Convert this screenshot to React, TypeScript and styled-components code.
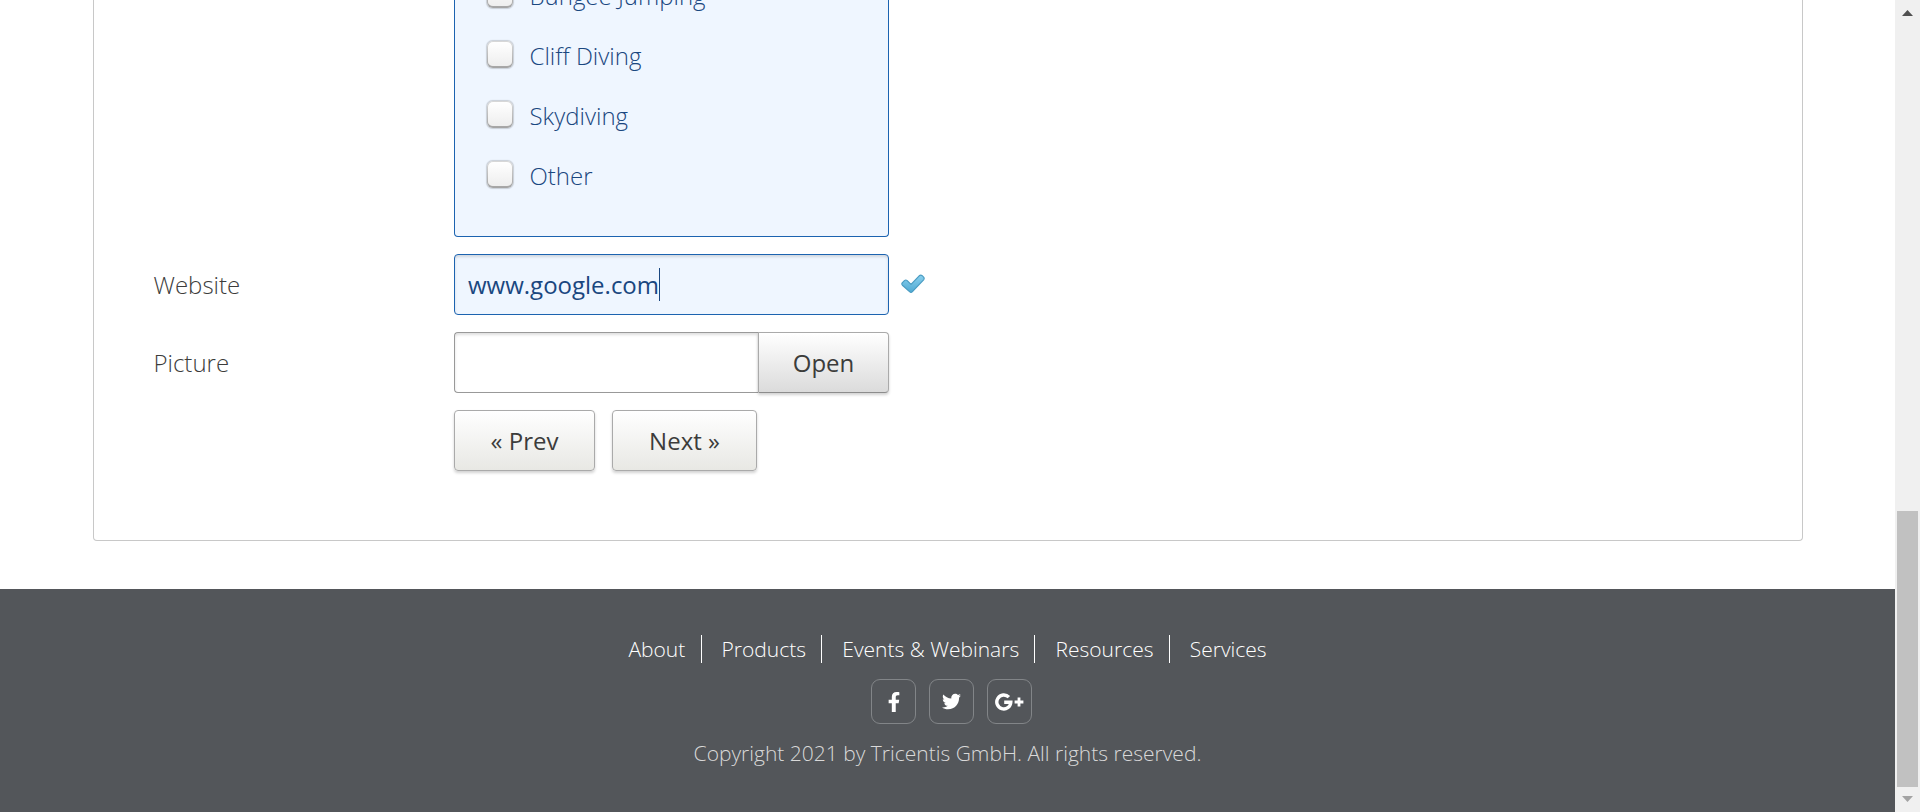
import React from "react";
import styled, { createGlobalStyle } from "styled-components";
import { FaFacebookF, FaTwitter } from "react-icons/fa";

const GlobalStyle = createGlobalStyle`
  *, *::before, *::after { box-sizing: border-box; }
  body {
    margin: 0;
    overflow: hidden;
    background: #fff;
    font-family: "Open Sans", "Liberation Sans", sans-serif;
    font-size: 24px;
    font-weight: 300;
    color: #3c3c3b;
  }
`;

const Window = styled.div`
  display: grid;
  grid-template-columns: 1fr 25px;
  height: 812px;
  overflow: hidden;
`;

const Page = styled.div`
  display: flex;
  flex-direction: column;
  height: 812px;
  overflow: hidden;
`;

const Main = styled.main`
  display: flex;
  height: 589px;
  padding: 0 92px 48px 93px;
`;

const Panel = styled.section`
  display: flex;
  flex-direction: column;
  gap: 17px;
  width: 100%;
  height: 541px;
  padding-left: 59.5px;
  border: 1px solid #c8c8c8;
  border-top: 0;
  border-radius: 0 0 4px 4px;
`;

const Row = styled.div`
  display: grid;
  grid-template-columns: 300.5px 435px auto;
  align-items: center;
`;

const Label = styled.label`
  line-height: 32px;
`;

const Hobbies = styled.div`
  grid-column: 2;
  display: flex;
  flex-direction: column;
  justify-content: flex-end;
  height: 237px;
  padding: 0 32px 30px;
  overflow: hidden;
  border: 1px solid #1c63b0;
  border-top: 0;
  border-radius: 0 0 4px 4px;
  background: #eff6ff;
  color: #1a4780;
`;

const Option = styled.label`
  display: flex;
  flex: none;
  align-items: center;
  gap: 16.5px;
  height: 60px;
  line-height: 32px;
`;

const Box = styled.span`
  width: 26px;
  height: 27px;
  margin-top: -3px;
  border: 1px solid transparent;
  border-bottom-width: 2px;
  border-radius: 6px;
  background:
    linear-gradient(#fff, #eee) padding-box,
    linear-gradient(#d8d8d8, #a4a4a4) border-box;
  box-shadow: 0 0 1px 0.5px rgba(0, 0, 0, 0.16);
`;

const Field = styled.div<{ $valid?: boolean }>`
  display: flex;
  align-items: center;
  height: 61px;
  padding-left: 13px;
  border: 1px solid ${(p) => (p.$valid ? "#1c63b0" : "#999")};
  border-right-width: ${(p) => (p.$valid ? "1px" : "0")};
  border-radius: ${(p) => (p.$valid ? "4px" : "4px 0 0 4px")};
  background: ${(p) => (p.$valid ? "#eff6ff" : "#fff")};
  box-shadow: inset 0 2px 3px rgba(0, 0, 0, 0.13);
  color: #1a4780;
  font-weight: 400;
`;

const Caret = styled.span`
  width: 1px;
  height: 33px;
  background: #1a4780;
`;

const CheckIcon = styled.svg`
  display: block;
  width: 24px;
  height: 20px;
  margin: -1px 0 0 12px;
`;

const Picker = styled.div`
  display: grid;
  grid-template-columns: 304px 131px;
`;

const Button = styled.button<{ $width: number; $attached?: boolean }>`
  width: ${(p) => p.$width}px;
  height: 61px;
  padding: 0 0 1px;
  border: 1px solid #aaa;
  border-bottom-color: ${(p) => (p.$attached ? "#8c8c8c" : "#aaa")};
  border-radius: ${(p) => (p.$attached ? "0 4px 4px 0" : "4px")};
  background: linear-gradient(#fff, ${(p) => (p.$attached ? "#dbdbdb" : "#e8e8e4")});
  box-shadow: 0 2px 3px rgba(0, 0, 0, 0.18);
  color: #3c3c3b;
  font: 400 24px "Open Sans", "Liberation Sans", sans-serif;
`;

const Actions = styled.div`
  grid-column: 2;
  display: flex;
  gap: 17px;
`;

const Footer = styled.footer`
  display: flex;
  flex: 1;
  flex-direction: column;
  align-items: center;
  padding-top: 46px;
  background: #53565a;
  color: #fff;
  font-size: 21px;
`;

const Nav = styled.nav`
  display: flex;
  height: 28px;
  line-height: 29px;
`;

const NavLink = styled.a`
  height: 28px;
  color: #fff;
  white-space: nowrap;

  & + & {
    margin-left: 15.3px;
    padding-left: 20px;
    border-left: 1px solid #fff;
  }
`;

const Social = styled.div`
  display: flex;
  gap: 13px;
  margin: 16px 0 0 8px;
`;

const SocialLink = styled.a`
  display: flex;
  align-items: center;
  justify-content: center;
  width: 45px;
  height: 45px;
  border: 1px solid #828588;
  border-radius: 9px;
  color: #fff;
`;

const Copyright = styled.p`
  margin: 14px 0 0;
  color: #d9d9d9;
  line-height: 31px;
`;

const Scrollbar = styled.div`
  display: flex;
  flex-direction: column;
  align-items: center;
  justify-content: space-between;
  height: 812px;
  padding: 10px 0;
  background: #f0f0f0;
`;

const Thumb = styled.div`
  width: 21px;
  height: 276px;
  margin: 495px 0 9px;
  background: #c1c1c1;
`;

const Arrow = styled.svg`
  display: block;
  flex: none;
  width: 11px;
  height: 6px;
`;

const GooglePlus = () => (
  <svg width="29" height="18" viewBox="0 0 29 18" fill="none" stroke="#fff">
    <path d="M13.9 4.2A7 7 0 1 0 15.8 9.3H9.2" strokeWidth="3.4" />
    <path d="M19.6 9H28.4M24 4.6V13.4" strokeWidth="2.8" />
  </svg>
);

const hobbies = ["Bungee Jumping", "Cliff Diving", "Skydiving", "Other"];
const links = ["About", "Products", "Events & Webinars", "Resources", "Services"];

export default function App() {
  return (
    <>
      <GlobalStyle />
      <Window>
        <Page>
          <Main>
            <Panel>
              <Row>
                <Hobbies>
                  {hobbies.map((name) => (
                    <Option key={name}>
                      <Box />
                      {name}
                    </Option>
                  ))}
                </Hobbies>
              </Row>
              <Row>
                <Label>Website</Label>
                <Field $valid>
                  www.google.com
                  <Caret />
                </Field>
                <CheckIcon viewBox="0 0 24 20">
                  <defs>
                    <linearGradient id="tick" x1="0" y1="0" x2="0" y2="1">
                      <stop offset="0" stopColor="#8ad0ee" />
                      <stop offset="1" stopColor="#4fa9d2" />
                    </linearGradient>
                  </defs>
                  <path
                    d="M1.4 8.6 3.4 6.6Q4.8 5.4 6.2 6.6L10 10.4 18.2 1.8Q19.7.6 21.2 1.7L22.6 3.1Q23.7 4.4 22.6 5.8L11.2 17.9Q10 18.9 8.8 17.9L1.4 11.2Q.3 9.9 1.4 8.6Z"
                    fill="url(#tick)"
                    stroke="#4a9cc2"
                    strokeWidth="1.2"
                    strokeLinejoin="round"
                  />
                </CheckIcon>
              </Row>
              <Row>
                <Label>Picture</Label>
                <Picker>
                  <Field />
                  <Button $width={131} $attached>Open</Button>
                </Picker>
              </Row>
              <Row>
                <Actions>
                  <Button $width={141}>« Prev</Button>
                  <Button $width={145}>Next »</Button>
                </Actions>
              </Row>
            </Panel>
          </Main>
          <Footer>
            <Nav>
              {links.map((link) => (
                <NavLink key={link}>{link}</NavLink>
              ))}
            </Nav>
            <Social>
              <SocialLink><FaFacebookF size={20} /></SocialLink>
              <SocialLink><FaTwitter size={19} /></SocialLink>
              <SocialLink><GooglePlus /></SocialLink>
            </Social>
            <Copyright>Copyright 2021 by Tricentis GmbH. All rights reserved.</Copyright>
          </Footer>
        </Page>
        <Scrollbar>
          <Arrow viewBox="0 0 11 6"><path d="M5.5 0 11 6H0Z" fill="#505050" /></Arrow>
          <Thumb />
          <Arrow viewBox="0 0 11 6"><path d="M0 0H11L5.5 6Z" fill="#a3a3a3" /></Arrow>
        </Scrollbar>
      </Window>
    </>
  );
}
